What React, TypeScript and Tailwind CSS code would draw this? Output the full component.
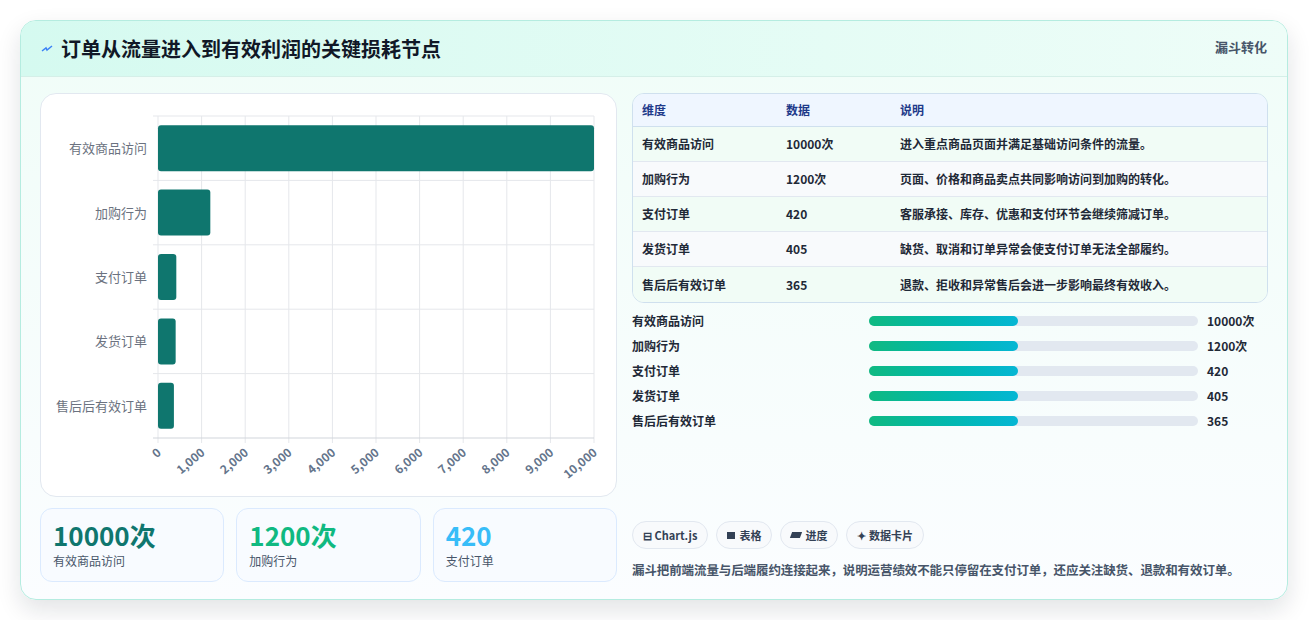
import React from 'react';

const rows = [
  { name: '有效商品访问', value: 10000, label: '10000次', note: '进入重点商品页面并满足基础访问条件的流量。' },
  { name: '加购行为', value: 1200, label: '1200次', note: '页面、价格和商品卖点共同影响访问到加购的转化。' },
  { name: '支付订单', value: 420, label: '420', note: '客服承接、库存、优惠和支付环节会继续筛减订单。' },
  { name: '发货订单', value: 405, label: '405', note: '缺货、取消和订单异常会使支付订单无法全部履约。' },
  { name: '售后后有效订单', value: 365, label: '365', note: '退款、拒收和异常售后会进一步影响最终有效收入。' },
];

const font = { fontFamily: '"Noto Sans CJK SC", "Noto Sans", sans-serif' };

function FunnelChart() {
  const x0 = 117, x1 = 553, y0 = 22, y1 = 344;
  const rowH = (y1 - y0) / rows.length;
  const ticks = Array.from({ length: 11 }, (_, i) => i);
  return (
    <svg width="574" height="401" style={font}>
      {ticks.map((t) => {
        const x = x0 + ((x1 - x0) * t) / 10;
        return <line key={t} x1={x} x2={x} y1={y0} y2={y1 + 5} stroke="#e5e7eb" strokeWidth="1" />;
      })}
      {rows.map((_, i) => (
        <line key={i} x1={x0 - 5} x2={x1} y1={y0 + rowH * i} y2={y0 + rowH * i} stroke="#e5e7eb" />
      ))}
      <line x1={x0 - 5} x2={x1} y1={y1} y2={y1} stroke="#d1d5db" />
      {rows.map((r, i) => {
        const cy = y0 + rowH * i + rowH / 2;
        const w = ((x1 - x0) * r.value) / 10000;
        return (
          <g key={r.name}>
            <rect x={x0} y={cy - 23} width={w} height="46" rx="3" fill="#0f766e" />
            <text x="106" y={cy + 5} textAnchor="end" fontSize="13" fill="#6b7280">{r.name}</text>
          </g>
        );
      })}
      {ticks.map((t) => {
        const x = x0 + ((x1 - x0) * t) / 10;
        return (
          <text key={t} x={x + 4} y={y1 + 16} textAnchor="end" fontSize="12" fontWeight="600" fill="#64748b" transform={`rotate(-40 ${x + 4} ${y1 + 16})`}>
            {(t * 1000).toLocaleString('en-US')}
          </text>
        );
      })}
    </svg>
  );
}

export default function App() {
  return (
    <div className="w-[1309px] h-[620px] bg-white pt-5 pl-5" style={font}>
      <div className="w-[1268px] h-[580px] rounded-2xl border border-[#b5ece0] overflow-hidden shadow-[0_10px_25px_rgba(15,23,42,0.12)] bg-gradient-to-b from-[#f0fdf8] to-[#fbfdff]">
        <div className="h-[56px] flex items-center justify-between px-5 bg-gradient-to-r from-[#d5faf0] to-[#eefdf8] border-b border-[#d5efe8]">
          <div className="flex items-center gap-2">
            <svg width="12" height="10" viewBox="0 0 12 10">
              <path d="M1 7 L5 4 L6 6 L11 2" stroke="#3b82f6" strokeWidth="1.5" fill="none" />
            </svg>
            <h1 className="text-[20px] font-bold text-[#111827]">订单从流量进入到有效利润的关键损耗节点</h1>
          </div>
          <span className="self-start mt-4 text-[13px] font-bold text-[#475569]">漏斗转化</span>
        </div>
        <div className="flex gap-[15px] px-[19px] pt-4">
          <div className="w-[577px] flex flex-col gap-[11px]">
            <div className="h-[404px] bg-white rounded-2xl border border-[#e2e8f0]">
              <FunnelChart />
            </div>
            <div className="flex gap-3">
              {[
                { v: '10000次', l: '有效商品访问', c: 'text-[#0f766e]' },
                { v: '1200次', l: '加购行为', c: 'text-[#10b981]' },
                { v: '420', l: '支付订单', c: 'text-[#38bdf8]' },
              ].map((s) => (
                <div key={s.l} className="flex-1 h-[74px] rounded-xl border border-[#dbeafe] bg-[#f8fbff] px-3 pt-2">
                  <div className={`text-[26px] font-bold leading-9 ${s.c}`}>{s.v}</div>
                  <div className="text-xs text-[#475569]">{s.l}</div>
                </div>
              ))}
            </div>
          </div>
          <div className="flex-1 flex flex-col">
            <div className="rounded-xl border border-[#cfe0ee] overflow-hidden text-xs">
              <div className="flex h-[33px] items-center bg-[#eff6ff] border-b border-[#cfe0ee] font-bold text-[#1e3a8a]">
                <div className="w-[153px] pl-[9px]">维度</div>
                <div className="w-[114px]">数据</div>
                <div>说明</div>
              </div>
              {rows.map((r, i) => (
                <div key={r.name} className={`flex h-[35px] items-center font-semibold text-[#1f2937] ${i < 4 ? 'border-b border-[#e2e8f0]' : ''} ${i % 2 === 0 ? 'bg-[#f1fcf6]' : 'bg-[#f8fafc]'}`}>
                  <div className="w-[153px] pl-[9px]">{r.name}</div>
                  <div className="w-[114px]">{r.label}</div>
                  <div>{r.note}</div>
                </div>
              ))}
            </div>
            <div className="flex flex-col gap-[7px] mt-[9px] text-xs font-bold text-[#1f2937]">
              {rows.map((r) => (
                <div key={r.name} className="flex items-center h-[18px]">
                  <div className="w-[237px]">{r.name}</div>
                  <div className="w-[329px] h-[10px] rounded-full bg-[#e2e8f0]">
                    <div className="w-[149px] h-full rounded-full bg-gradient-to-r from-[#10b981] to-[#06b6d4]" />
                  </div>
                  <div className="ml-[9px]">{r.label}</div>
                </div>
              ))}
            </div>
            <div className="flex gap-2 mt-[91px] text-[11px] font-bold text-[#334155]">
              <span className="h-[28px] px-[10px] flex items-center gap-1 rounded-full border border-[#e2e8f0] bg-[#f8fafc]">⊟ Chart.js</span>
              <span className="h-[28px] px-[10px] flex items-center gap-1 rounded-full border border-[#e2e8f0] bg-[#f8fafc]">
                <span className="inline-block w-[8px] h-[7px] bg-[#334155]" />表格
              </span>
              <span className="h-[28px] px-[10px] flex items-center gap-1 rounded-full border border-[#e2e8f0] bg-[#f8fafc]">
                <span className="inline-block w-[10px] h-[6px] bg-[#334155] skew-x-[-20deg]" />进度
              </span>
              <span className="h-[28px] px-[10px] flex items-center gap-1 rounded-full border border-[#e2e8f0] bg-[#f8fafc]">✦ 数据卡片</span>
            </div>
            <p className="mt-[12px] text-[12.5px] font-semibold text-[#475569] whitespace-nowrap tracking-[-0.1px]">
              漏斗把前端流量与后端履约连接起来，说明运营绩效不能只停留在支付订单，还应关注缺货、退款和有效订单。
            </p>
          </div>
        </div>
      </div>
    </div>
  );
}
